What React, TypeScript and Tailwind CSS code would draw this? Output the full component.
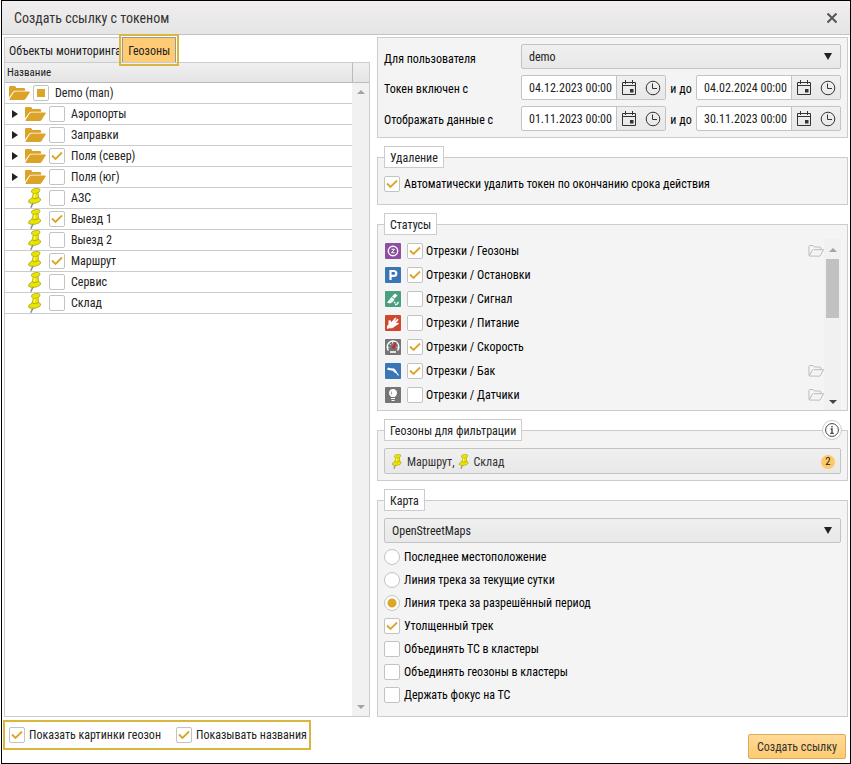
import { useState, type ReactNode } from "react";
import clsx from "clsx";

type ZoneNode = {
  name: string;
  kind: "root" | "group" | "zone";
  state?: "checked" | "partial";
};

const zones: ZoneNode[] = [
  { name: "Demo (man)", kind: "root", state: "partial" },
  { name: "Аэропорты", kind: "group" },
  { name: "Заправки", kind: "group" },
  { name: "Поля (север)", kind: "group", state: "checked" },
  { name: "Поля (юг)", kind: "group" },
  { name: "АЗС", kind: "zone" },
  { name: "Выезд 1", kind: "zone", state: "checked" },
  { name: "Выезд 2", kind: "zone" },
  { name: "Маршрут", kind: "zone", state: "checked" },
  { name: "Сервис", kind: "zone" },
  { name: "Склад", kind: "zone" },
];

const statuses = [
  { name: "Отрезки / Геозоны", icon: "zone", checked: true, folder: true },
  { name: "Отрезки / Остановки", icon: "parking", checked: true },
  { name: "Отрезки / Сигнал", icon: "signal" },
  { name: "Отрезки / Питание", icon: "power" },
  { name: "Отрезки / Скорость", icon: "speed", checked: true },
  { name: "Отрезки / Бак", icon: "tank", checked: true, folder: true },
  { name: "Отрезки / Датчики", icon: "sensor", folder: true },
];

const trackModes = [
  "Последнее местоположение",
  "Линия трека за текущие сутки",
  "Линия трека за разрешённый период",
];

export default function App() {
  return (
    <div className="min-h-screen bg-white pl-px font-['Roboto_Condensed','Liberation_Sans_Narrow',Roboto,sans-serif] text-xs text-[#222]">
      <div className="flex min-h-screen flex-col border border-black">
        <header className="flex h-[34px] items-center justify-between border-b border-[#c3c3c3] bg-linear-to-b from-[#f0eeef] to-[#e6e5e6] pr-2.5 pl-3">
          <h1 className="text-sm text-[#333]">Создать ссылку с токеном</h1>
          <button aria-label="Закрыть" className="p-0.5">
            <svg width="12" height="12" viewBox="0 0 12 12">
              <path d="M1.5 1.5l9 9M10.5 1.5l-9 9" stroke="#555" strokeWidth="2" />
            </svg>
          </button>
        </header>
        <main className="grid grow grid-cols-[366fr_471fr] gap-[7px] px-0.5 pt-0.5">
          <ZonesPanel />
          <SettingsPanel />
        </main>
        <footer className="flex h-[46px] items-start justify-between pt-[3px] pr-1 pl-px">
          <div className="flex h-[30px] items-center gap-[15px] border-2 border-[#dbb63c] pr-0.5 pl-1">
            <Check label="Показать картинки геозон" defaultChecked />
            <Check label="Показывать названия" defaultChecked />
          </div>
          <button className="mt-3.5 h-[25px] rounded-xs border border-[#dcab55] bg-linear-to-b from-[#ffda98] to-[#ffca70] px-2 text-[#333]">
            Создать ссылку
          </button>
        </footer>
      </div>
    </div>
  );
}

function ZonesPanel() {
  return (
    <section className="flex flex-col">
      <div className="flex h-[25px]">
        <button className="border border-r-0 border-b-0 border-[#ccc] bg-linear-to-b from-[#f3f3f3] to-[#e9e9e9] pt-px pr-px pl-1 whitespace-nowrap">
          Объекты мониторинга
        </button>
        <button className="relative border border-b-0 border-[#999] bg-[#ffcb75] px-[5px] pt-px">
          Геозоны
          <span className="absolute -inset-x-1 -top-1 -bottom-1 border-2 border-[#dbb63c]" />
        </button>
      </div>
      <div className="flex grow flex-col border border-[#ccc]">
        <div className="flex h-5 items-center border-b border-[#bbb] bg-linear-to-b from-[#f0f0f0] to-[#e4e4e4] pl-0.5 text-[11px]">
          <span className="grow pt-0.5">Название</span>
          <span className="h-full w-[17px] border-l border-[#bbb]" />
        </div>
        <div className="flex grow">
          <ul className="grow">
            {zones.map((zone) => (
              <ZoneRow key={zone.name} zone={zone} />
            ))}
          </ul>
          <div className="flex w-[17px] flex-col items-center justify-between bg-[#f1f1f1] py-[7px]">
            <Arrow className="rotate-180 text-[#a3a3a3]" />
            <Arrow className="text-[#a3a3a3]" />
          </div>
        </div>
      </div>
    </section>
  );
}

function ZoneRow({ zone }: { zone: ZoneNode }) {
  return (
    <li
      className={clsx(
        "flex h-[21px] items-center border-b border-[#ccc]",
        zone.kind === "root" && "pl-1",
        zone.kind === "group" && "pl-1.5",
        zone.kind === "zone" && "pl-5",
      )}
    >
      {zone.kind === "group" && (
        <button aria-label="Развернуть" className="mr-1.5">
          <svg width="8" height="8" viewBox="0 0 8 8">
            <path d="M1 0l6 4-6 4z" fill="#222" />
          </svg>
        </button>
      )}
      <span className="mr-[3px] flex w-[21px] shrink-0">
        {zone.kind === "zone" ? <Pin className="ml-0.5 h-5 w-4" /> : <Folder />}
      </span>
      <Check
        label={zone.name}
        defaultChecked={zone.state === "checked"}
        partial={zone.state === "partial"}
        gap="gap-1.5"
      />
    </li>
  );
}

function SettingsPanel() {
  const [mode, setMode] = useState(trackModes[2]);

  return (
    <section className="flex flex-col gap-2 text-black">
      <div className="grid grid-cols-[137fr_320fr] gap-y-1.5 border border-[#ccc] bg-[#f4f4f4] p-1.5">
        <label htmlFor="user" className="self-center pt-1">
          Для пользователя
        </label>
        <Select id="user" value="demo" />
        <span className="self-center pt-0.5">Токен включен с</span>
        <Period label="Токен включен" from="04.12.2023 00:00" to="04.02.2024 00:00" />
        <span className="self-center pt-0.5">Отображать данные с</span>
        <Period label="Отображать данные" from="01.11.2023 00:00" to="30.11.2023 00:00" />
      </div>

      <Group title="Удаление" className="pt-2 pb-3">
        <Check label="Автоматически удалить токен по окончанию срока действия" defaultChecked />
      </Group>

      <Group title="Статусы" className="pt-1">
        <div className="flex">
          <ul className="grow pb-[3px]">
            {statuses.map((status) => (
              <li key={status.name} className="flex h-6 items-center pl-px">
                <StatusIcon name={status.icon} />
                <span className="ml-1.5 grow">
                  <Check label={status.name} defaultChecked={status.checked} gap="gap-[3px]" />
                </span>
                {status.folder && <FolderOutline />}
              </li>
            ))}
          </ul>
          <div className="flex w-[17px] flex-col items-center bg-[#f1f1f1] pt-[9px] pb-1.5">
            <Arrow className="rotate-180 text-[#a3a3a3]" />
            <span className="mt-[7px] h-[59px] w-[13px] bg-[#c1c1c1]" />
            <Arrow className="mt-auto text-[#444]" />
          </div>
        </div>
      </Group>

      <Group title="Геозоны для фильтрации" className="relative pt-[7px] pb-1.5">
        <button
          aria-label="Информация"
          className="absolute -top-[21px] -right-px rounded-full border border-[#ccc] bg-white p-0.5"
        >
          <svg width="14" height="14" viewBox="0 0 14 14" fill="none" stroke="#444">
            <circle cx="7" cy="7" r="6.4" />
            <path d="M7 3v1.6M5.6 6H7v4.3M5.2 10.4h3.6" strokeWidth="1.4" />
          </svg>
        </button>
        <button className="flex h-[26px] w-full items-center rounded-xs border border-[#c3c3c3] bg-linear-to-b from-[#f0f0f0] to-[#e8e8e8] pt-px pr-[5px] pl-1.5 text-[#333]">
          <Pin className="mr-1 h-[15px] w-3" />
          Маршрут,
          <Pin className="mr-1 ml-[3px] h-[15px] w-3" />
          Склад
          <span className="ml-auto size-3.5 rounded-full bg-[#ffc966] text-[11px] leading-[14px] text-[#222]">
            2
          </span>
        </button>
      </Group>

      <Group title="Карта" className="pt-[7px] pb-[13px]">
        <Select aria-label="Карта" value="OpenStreetMaps" />
        <div className="mt-1.5 flex flex-col gap-[7px]">
          {trackModes.map((item) => (
            <label key={item} className="flex h-4 items-center gap-1">
              <input
                type="radio"
                name="track"
                checked={mode === item}
                onChange={() => setMode(item)}
                className="size-4 shrink-0 appearance-none rounded-full border border-[#c3c3c3] bg-white checked:bg-[radial-gradient(circle,#dba52a_4px,#fff_5px)]"
              />
              {item}
            </label>
          ))}
          <Check label="Утолщенный трек" defaultChecked />
          <Check label="Объединять ТС в кластеры" />
          <Check label="Объединять геозоны в кластеры" />
          <Check label="Держать фокус на ТС" />
        </div>
      </Group>
    </section>
  );
}

function Group(props: { title: string; className?: string; children: ReactNode }) {
  return (
    <fieldset className="min-w-0 border border-[#ccc] bg-[#f4f4f4] px-1.5">
      <legend className="h-[22px] border border-[#ccc] bg-white px-[5px] leading-[22px] text-[#222]">
        {props.title}
      </legend>
      <div className={props.className}>{props.children}</div>
    </fieldset>
  );
}

function Check(props: {
  label: string;
  defaultChecked?: boolean;
  partial?: boolean;
  gap?: string;
}) {
  return (
    <label className={clsx("flex h-4 items-center whitespace-nowrap", props.gap ?? "gap-1")}>
      <span className="grid size-4 shrink-0">
        <input
          type="checkbox"
          defaultChecked={props.defaultChecked}
          className="peer col-start-1 row-start-1 size-4 appearance-none rounded-xs border border-[#c3c3c3] bg-white"
        />
        <svg
          viewBox="0 0 16 16"
          className="pointer-events-none invisible col-start-1 row-start-1 peer-checked:visible"
        >
          <path d="M3 7.5l3.5 3.5 6.5-6.5" fill="none" stroke="#dba52a" strokeWidth="1.8" />
        </svg>
        {props.partial && (
          <span className="pointer-events-none col-start-1 row-start-1 m-1 bg-[#dba52a]" />
        )}
      </span>
      {props.label}
    </label>
  );
}

function Select(props: { id?: string; "aria-label"?: string; value: string }) {
  return (
    <div className="grid items-center">
      <select
        id={props.id}
        aria-label={props["aria-label"]}
        className="col-start-1 row-start-1 h-[25px] w-full appearance-none rounded-xs border border-[#c3c3c3] bg-linear-to-b from-[#f0f0f0] to-[#e8e8e8] px-[7px] text-[#222]"
      >
        <option>{props.value}</option>
      </select>
      <svg
        width="8"
        height="7"
        viewBox="0 0 8 7"
        className="pointer-events-none col-start-1 row-start-1 mr-[9px] justify-self-end"
      >
        <path d="M0 0h8L4 7z" fill="#222" />
      </svg>
    </div>
  );
}

function Period(props: { label: string; from: string; to: string }) {
  return (
    <div className="flex items-center justify-between">
      <DateField label={`${props.label} с`} value={props.from} />
      <span className="pt-0.5">и до</span>
      <DateField label={`${props.label} до`} value={props.to} />
    </div>
  );
}

function DateField({ label, value }: { label: string; value: string }) {
  return (
    <div className="flex h-[25px] rounded-xs border border-[#c3c3c3] bg-white">
      <input
        type="text"
        aria-label={label}
        defaultValue={value}
        className="w-[94px] pl-[7px] text-[#222]"
      />
      <div className="flex w-[49px] items-center justify-between border-l border-[#c3c3c3] bg-linear-to-b from-[#f0f0f0] to-[#e8e8e8] px-1">
        <button aria-label="Выбрать дату">
          <svg width="16" height="16" viewBox="0 0 16 16" fill="none" stroke="#333">
            <path d="M1.5 2.5h13v12h-13zM1 5.5h14M4.5 0v4M11.5 0v4" />
            <path d="M9 9h3.5v3.5H9z" fill="#333" stroke="none" />
          </svg>
        </button>
        <button aria-label="Выбрать время">
          <svg width="16" height="16" viewBox="0 0 16 16" fill="none" stroke="#333">
            <circle cx="8" cy="8" r="6.8" />
            <path d="M7.5 3.5v5H12" />
          </svg>
        </button>
      </div>
    </div>
  );
}

function Arrow({ className }: { className?: string }) {
  return (
    <svg width="8" height="4" viewBox="0 0 8 4" className={clsx("shrink-0", className)}>
      <path d="M0 0h8L4 4z" fill="currentColor" />
    </svg>
  );
}

function Folder() {
  return (
    <svg width="21" height="14" viewBox="0 0 21 14" className="shrink-0" fill="#dba428">
      <path d="M0 11.5V1.2Q0 0 1.2 0h4.2q1 0 1.4.8L7.300 2h7.500q1.300 0 1.300 1.200v1.500H6.400q-1.500 0-2.400 1.200z" />
      <path d="M6.700 5.400H20q1.400 0 .7 1.100l-4 6.200Q16 14 14.800 14H1.200Q0 14 .7 12.800l4-6.200q.7-1.200 2-1.200z" />
    </svg>
  );
}

function FolderOutline() {
  return (
    <svg width="16" height="12" viewBox="0 0 16 12" fill="none" stroke="#bdbdbd">
      <path d="M1 10.5v-9q0-1 1-1h3L6.200 2h5.600q1 0 1 1v1.700" />
      <path d="M1.200 11l3-5.500q.4-.8 1.300-.8h10l-2.900 5.500q-.5 1-1.400 1z" />
    </svg>
  );
}

function Pin({ className }: { className?: string }) {
  return (
    <svg viewBox="0 0 16 20" className={clsx("shrink-0", className)}>
      <path d="M6.200 14.500L3.800 19.700" stroke="#888" strokeWidth="1.500" />
      <path
        d="M4.600 2.300Q5.500.9 8.500.5q3.800-.4 4.300.7.600 1.600-.8 2.900l-.9.7.5 4.700q2.300.8 2.100 2.500-.5 2.100-5.300 3.200-5.300.8-6.900-1-.6-2.100 3.500-4.200L6.200 5.600Q3.900 4.600 4.600 2.300z"
        fill="#ebe400"
        stroke="#8f8d18"
        strokeWidth=".6"
      />
      <path d="M5.200 9.900q2.200 2.200 6.400-.4" stroke="#a5a000" strokeWidth=".8" fill="none" />
      <path d="M6.300 5.400q2.500.4 4.800-.8" stroke="#a5a000" strokeWidth=".6" fill="none" />
      <path d="M7.700 5.800l-.5 3.700" stroke="#fffb66" strokeWidth="1.400" />
    </svg>
  );
}

function StatusIcon({ name }: { name: string }) {
  return (
    <svg width="16" height="16" viewBox="0 0 16 16" className="shrink-0" fill="none" stroke="#fff">
      {name === "zone" && (
        <>
          <rect width="16" height="16" rx="1" fill="#8e4fa0" stroke="none" />
          <circle cx="8" cy="8" r="4.700" strokeWidth="1.400" />
          <path d="M6.500 6.300h3l-3 3.400h3" />
        </>
      )}
      {name === "parking" && (
        <>
          <rect width="16" height="16" rx="1" fill="#3a75b5" stroke="none" />
          <path d="M5.500 13V4h3.200q2.600 0 2.600 2.400T8.700 8.900H6" strokeWidth="2.200" />
        </>
      )}
      {name === "signal" && (
        <>
          <rect width="16" height="16" rx="1" fill="#4a9f80" stroke="none" />
          <path d="M10 2.500l2.500 2-3 3L7 5.500z" fill="#fff" stroke="none" />
          <path d="M6.500 6l3 2.500-2 2.500-3-2.500z" fill="#fff" stroke="none" />
          <path d="M4.500 8.500L7.500 11 5 12.500 2 11.500z" fill="#fff" stroke="none" />
          <path d="M9 11l1.500 1.200M10 13.800q3 0 3.300-3" strokeWidth="1.300" />
        </>
      )}
      {name === "power" && (
        <>
          <rect width="16" height="16" rx="1" fill="#d0472f" stroke="none" />
          <path
            d="M3.500 5.500l2-.300.700 2L10.300 2.500l1.200.8-2.300 3.300L12.600 3.800l1 1-2.800 3.200 2.700-.200.200 1.300L10.500 11l-3.200 2.300H4L2 14v-3l1.500-1.500z"
            fill="#fff"
            stroke="none"
          />
        </>
      )}
      {name === "speed" && (
        <>
          <rect width="16" height="16" rx="1" fill="#757575" stroke="none" />
          <path d="M3.500 11.500a5.800 5.800 0 1 1 9 0" strokeWidth="1.400" />
          <path d="M4.500 4.500l1.400 1.400M2.500 8.300h2M11.500 8.300h2M7.500 2.500v2" strokeWidth=".8" />
          <path d="M10.800 3.500L9.200 9.500 7.300 8.800z" fill="#d8202a" stroke="#d8202a" />
          <path d="M5 13h6" strokeWidth="1.600" />
        </>
      )}
      {name === "tank" && (
        <>
          <rect width="16" height="16" rx="1" fill="#3a75b5" stroke="none" />
          <path d="M2 6.500L3 4.500l2.500.8 3.700.2 2.300 2.700v1.500l-1.500.300L7.800 7.800 5 7.300z" fill="#fff" stroke="none" />
          <path d="M10.500 8.500l3 4" strokeWidth="1.200" />
        </>
      )}
      {name === "sensor" && (
        <>
          <rect width="16" height="16" rx="1" fill="#757575" stroke="none" />
          <path d="M6.200 10Q3.800 8 4 5.700 4.500 2 8 2t4 3.700Q12.200 8 9.800 10z" fill="#fff" stroke="none" />
          <path d="M6.500 4.500v3" stroke="#8fbf5f" />
          <path d="M6 11.500h4M6.500 13.500h3" />
        </>
      )}
    </svg>
  );
}
